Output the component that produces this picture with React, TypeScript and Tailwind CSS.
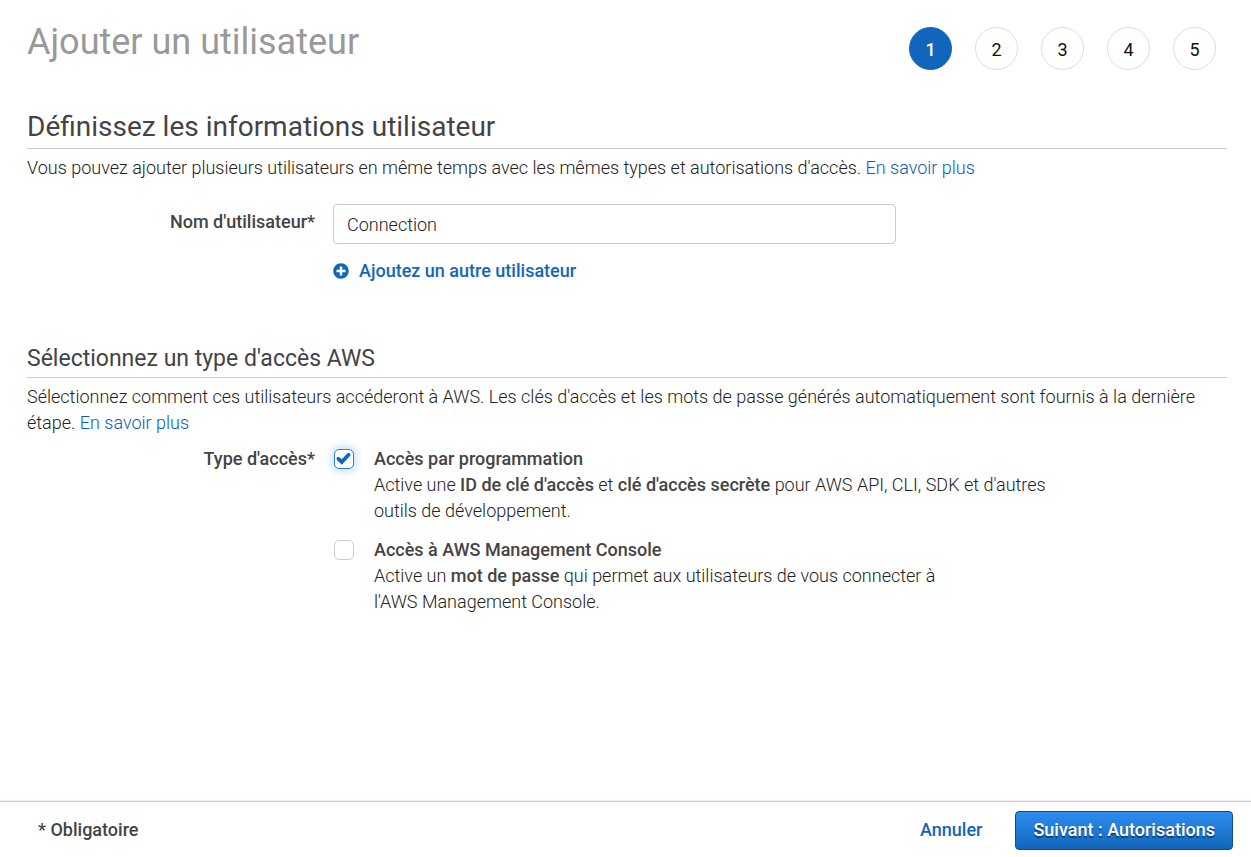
import React, { useState } from 'react';
import { FaPlusCircle } from 'react-icons/fa';

const steps = [1, 2, 3, 4, 5];

interface AccessOptionProps {
  id: string;
  title: string;
  checked: boolean;
  onChange: (checked: boolean) => void;
  children: React.ReactNode;
}

const CheckMark: React.FC = () => (
  <svg
    viewBox="0 0 20 20"
    className="pointer-events-none col-start-1 row-start-1 h-5 w-5"
    fill="none"
    stroke="#1166bb"
    strokeWidth="3.8"
    aria-hidden="true"
  >
    <path d="M4.4 9.8 L7.8 13 L14.6 5.8" strokeLinejoin="miter" strokeLinecap="round" />
  </svg>
);

const AccessOption: React.FC<AccessOptionProps> = ({ id, title, checked, onChange, children }) => (
  <div className="flex gap-5">
    <span className="mt-[3px] grid h-5 w-5 shrink-0">
      <input
        id={id}
        type="checkbox"
        checked={checked}
        onChange={(e) => onChange(e.target.checked)}
        className="col-start-1 row-start-1 h-5 w-5 appearance-none rounded-[5px] border border-[#ccc] bg-white checked:border-[#2b7fd6] checked:shadow-[0_0_8px_2px_#c5dcf8]"
      />
      {checked && <CheckMark />}
    </span>
    <div>
      <label htmlFor={id} className="font-medium">{title}</label>
      <p className="font-light text-[#222]">{children}</p>
    </div>
  </div>
);

const App: React.FC = () => {
  const [userName, setUserName] = useState('Connection');
  const [programmatic, setProgrammatic] = useState(true);
  const [consoleAccess, setConsoleAccess] = useState(false);

  return (
    <div className="flex min-h-screen flex-col bg-white font-['Roboto',sans-serif] text-[18px] leading-[26px] text-[#444]">
      <main className="flex-1 pl-[27px] pr-6">
        <header className="flex items-start justify-between pr-[11px]">
          <h1 className="pt-5 text-[36px] leading-[44px] text-[#999]">Ajouter un utilisateur</h1>
          <ol className="flex gap-[23px] pt-[27px]">
            {steps.map((step) => (
              <li
                key={step}
                className={`flex h-[43px] w-[43px] items-center justify-center rounded-full border pt-[2px] ${
                  step === 1 ? 'border-[#1166bb] bg-[#1166bb] font-medium text-white' : 'border-[#ddd] text-[#111]'
                }`}
              >
                {step}
              </li>
            ))}
          </ol>
        </header>

        <section className="mt-[38px]">
          <h2 className="border-b border-[#ccc] pb-[3px] text-[28px] leading-[37px]">
            Définissez les informations utilisateur
          </h2>
          <p className="mt-[6px] font-light text-[#222]">
            Vous pouvez ajouter plusieurs utilisateurs en même temps avec les mêmes types et autorisations d'accès.{' '}
            <a href="#" className="text-[#0a5cb8]">En savoir plus</a>
          </p>
          <div className="mt-[23px] flex gap-[18px]">
            <label htmlFor="user-name" className="w-72 shrink-0 pt-[5px] text-right font-medium">Nom d'utilisateur*</label>
            <div className="w-[563px]">
              <input
                id="user-name"
                type="text"
                value={userName}
                onChange={(e) => setUserName(e.target.value)}
                className="block h-10 w-full rounded border border-[#ccc] px-[13px] font-light text-[#222] outline-none"
              />
              <button type="button" className="mt-[14px] flex items-center gap-[10px] font-medium text-[#1166bb]">
                <FaPlusCircle className="text-base" />
                Ajoutez un autre utilisateur
              </button>
            </div>
          </div>
        </section>

        <section className="mt-[58px]">
          <h2 className="border-b border-[#ccc] pb-[2px] text-[23px] leading-[33px]">Sélectionnez un type d'accès AWS</h2>
          <p className="mt-[6px] font-light text-[#222]">
            Sélectionnez comment ces utilisateurs accéderont à AWS. Les clés d'accès et les mots de passe générés
            automatiquement sont fournis à la dernière étape.{' '}
            <a href="#" className="text-[#0a5cb8]">En savoir plus</a>
          </p>
          <div className="mt-[10px] flex gap-[19px]">
            <span className="w-72 shrink-0 text-right font-medium">Type d'accès*</span>
            <div className="flex max-w-[720px] flex-col gap-[13px]">
              <AccessOption
                id="programmatic"
                title="Accès par programmation"
                checked={programmatic}
                onChange={setProgrammatic}
              >
                Active une <b className="font-medium text-[#444]">ID de clé d'accès</b> et{' '}
                <b className="font-medium text-[#444]">clé d'accès secrète</b> pour AWS API, CLI, SDK et d'autres
                <br />
                outils de développement.
              </AccessOption>
              <AccessOption
                id="console"
                title="Accès à AWS Management Console"
                checked={consoleAccess}
                onChange={setConsoleAccess}
              >
                Active un <b className="font-medium text-[#444]">mot de passe</b> qui permet aux utilisateurs de vous
                connecter à
                <br />
                l'AWS Management Console.
              </AccessOption>
            </div>
          </div>
        </section>
      </main>

      <footer className="flex items-start justify-between border-t border-[#ccc] pt-[9px] pb-[7px] pl-[38px] pr-[18px] font-medium shadow-[0_-1px_1px_#eee]">
        <span className="pt-[6px]">* Obligatoire</span>
        <div className="flex items-start gap-[33px]">
          <button type="button" className="pt-[6px] text-[#1166bb]">Annuler</button>
          <button
            type="button"
            className="h-[39px] rounded border border-[#0f4a8a] bg-linear-to-b from-[#2e8df0] to-[#1166bb] px-[17px] pb-[2px] font-medium text-white [text-shadow:0_2px_1px_rgba(0,0,0,0.45)]"
          >
            Suivant : Autorisations
          </button>
        </div>
      </footer>
    </div>
  );
};

export default App;
